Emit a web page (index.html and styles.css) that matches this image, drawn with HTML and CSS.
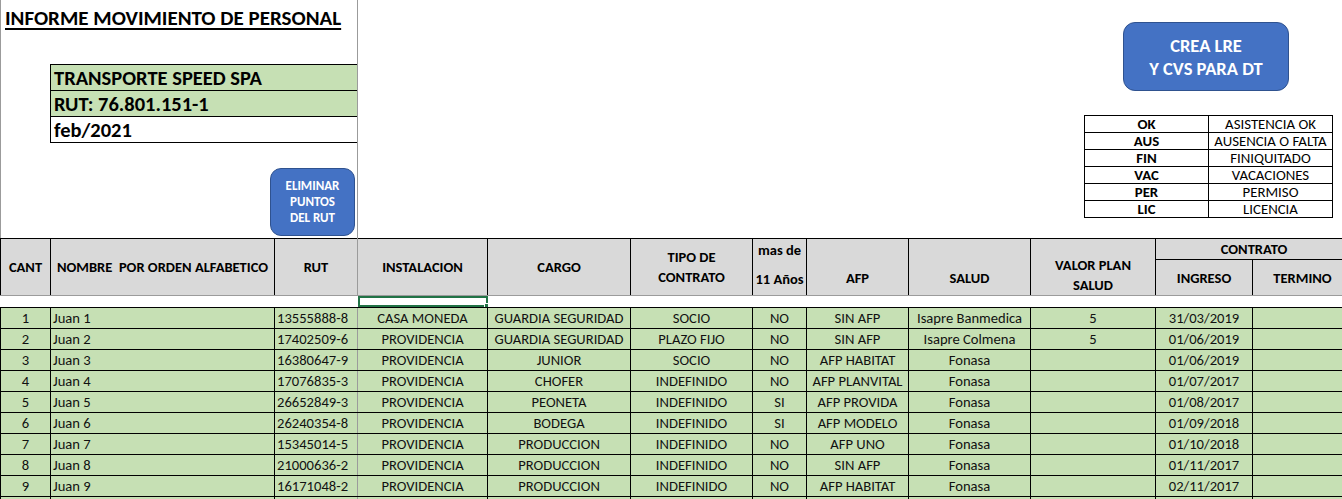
FILE: index.html
```html
<!DOCTYPE html>
<html lang="es">
<head>
<meta charset="utf-8">
<title>Informe Movimiento de Personal</title>
<link rel="stylesheet" href="styles.css">
</head>
<body>
<div class="sheet">
  <div class="top">
    <div class="pane">
      <h1 class="title">INFORME MOVIMIENTO DE PERSONAL</h1>
      <div class="company">
        <div class="co-row green">TRANSPORTE SPEED SPA</div>
        <div class="co-row green">RUT: 76.801.151-1</div>
        <div class="co-row">feb/2021</div>
      </div>
      <div class="btn-row">
        <div class="btn btn-small">ELIMINAR<br>PUNTOS<br>DEL RUT</div>
      </div>
    </div>
    <div class="right">
      <div class="btn btn-big">CREA LRE<br>Y CVS PARA DT</div>
      <table class="legend">
        <tr><th>OK</th><td>ASISTENCIA OK</td></tr>
        <tr><th>AUS</th><td>AUSENCIA O FALTA</td></tr>
        <tr><th>FIN</th><td>FINIQUITADO</td></tr>
        <tr><th>VAC</th><td>VACACIONES</td></tr>
        <tr><th>PER</th><td>PERMISO</td></tr>
        <tr><th>LIC</th><td>LICENCIA</td></tr>
      </table>
    </div>
  </div>

  <table class="grid">
    <colgroup>
      <col class="c-cant"><col class="c-nombre"><col class="c-rut"><col class="c-inst">
      <col class="c-cargo"><col class="c-tipo"><col class="c-mas"><col class="c-afp">
      <col class="c-salud"><col class="c-valor"><col class="c-ing"><col class="c-ter">
    </colgroup>
    <thead>
      <tr class="h1">
        <th rowspan="2">CANT</th>
        <th rowspan="2">NOMBRE&nbsp; POR ORDEN ALFABETICO</th>
        <th rowspan="2" class="freeze">RUT</th>
        <th rowspan="2">INSTALACION</th>
        <th rowspan="2">CARGO</th>
        <th rowspan="2">TIPO DE<br>CONTRATO</th>
        <th rowspan="2" class="mas"><div class="mas-in"><span>mas de</span><span>11 Años</span></div></th>
        <th rowspan="2" class="bottom">AFP</th>
        <th rowspan="2" class="bottom">SALUD</th>
        <th rowspan="2" class="bottom valor">VALOR PLAN<br>SALUD</th>
        <th colspan="2" class="contrato">CONTRATO</th>
      </tr>
      <tr class="h2">
        <th>INGRESO</th>
        <th>TERMINO</th>
      </tr>
    </thead>
    <tbody>
      <tr class="empty">
        <td></td><td></td><td class="freeze"></td><td class="sel"></td><td></td><td></td><td></td><td></td><td></td><td></td><td></td><td></td>
      </tr>
      <tr><td>1</td><td class="l">Juan 1</td><td class="l freeze">13555888-8</td><td>CASA MONEDA</td><td>GUARDIA SEGURIDAD</td><td>SOCIO</td><td>NO</td><td>SIN AFP</td><td>Isapre Banmedica</td><td>5</td><td>31/03/2019</td><td></td></tr>
      <tr><td>2</td><td class="l">Juan 2</td><td class="l freeze">17402509-6</td><td>PROVIDENCIA</td><td>GUARDIA SEGURIDAD</td><td>PLAZO FIJO</td><td>NO</td><td>SIN AFP</td><td>Isapre Colmena</td><td>5</td><td>01/06/2019</td><td></td></tr>
      <tr><td>3</td><td class="l">Juan 3</td><td class="l freeze">16380647-9</td><td>PROVIDENCIA</td><td>JUNIOR</td><td>SOCIO</td><td>NO</td><td>AFP HABITAT</td><td>Fonasa</td><td></td><td>01/06/2019</td><td></td></tr>
      <tr><td>4</td><td class="l">Juan 4</td><td class="l freeze">17076835-3</td><td>PROVIDENCIA</td><td>CHOFER</td><td>INDEFINIDO</td><td>NO</td><td>AFP PLANVITAL</td><td>Fonasa</td><td></td><td>01/07/2017</td><td></td></tr>
      <tr><td>5</td><td class="l">Juan 5</td><td class="l freeze">26652849-3</td><td>PROVIDENCIA</td><td>PEONETA</td><td>INDEFINIDO</td><td>SI</td><td>AFP PROVIDA</td><td>Fonasa</td><td></td><td>01/08/2017</td><td></td></tr>
      <tr><td>6</td><td class="l">Juan 6</td><td class="l freeze">26240354-8</td><td>PROVIDENCIA</td><td>BODEGA</td><td>INDEFINIDO</td><td>SI</td><td>AFP MODELO</td><td>Fonasa</td><td></td><td>01/09/2018</td><td></td></tr>
      <tr><td>7</td><td class="l">Juan 7</td><td class="l freeze">15345014-5</td><td>PROVIDENCIA</td><td>PRODUCCION</td><td>INDEFINIDO</td><td>NO</td><td>AFP UNO</td><td>Fonasa</td><td></td><td>01/10/2018</td><td></td></tr>
      <tr><td>8</td><td class="l">Juan 8</td><td class="l freeze">21000636-2</td><td>PROVIDENCIA</td><td>PRODUCCION</td><td>INDEFINIDO</td><td>NO</td><td>SIN AFP</td><td>Fonasa</td><td></td><td>01/11/2017</td><td></td></tr>
      <tr><td>9</td><td class="l">Juan 9</td><td class="l freeze">16171048-2</td><td>PROVIDENCIA</td><td>PRODUCCION</td><td>INDEFINIDO</td><td>NO</td><td>AFP HABITAT</td><td>Fonasa</td><td></td><td>02/11/2017</td><td></td></tr>
      <tr><td></td><td class="l"></td><td class="l freeze"></td><td></td><td></td><td></td><td></td><td></td><td></td><td></td><td></td><td></td></tr>
    </tbody>
  </table>
</div>
</body>
</html>
```

FILE: styles.css
```css
html, body {
  margin: 0;
  padding: 0;
  background: #ffffff;
  overflow: hidden;
}

.sheet {
  width: 1342px;
  height: 499px;
  overflow: hidden;
  font-family: Carlito, Calibri, Lato, "Liberation Sans", sans-serif;
  color: #000;
}

/* ---------- top area ---------- */
.top {
  display: flex;
  height: 238px;
}

.pane {
  width: 358px;
  flex: none;
  box-sizing: border-box;
  border-left: 1px solid #9b9b9b;
  border-right: 1px solid #9b9b9b;
  display: flex;
  flex-direction: column;
}

.title {
  margin: 6px 0 0 4px;
  font-size: 21px;
  line-height: 25px;
  font-weight: bold;
  text-decoration: underline;
  text-underline-offset: 3px;
  white-space: nowrap;
}

.company {
  margin: 33px 0 0 49px;
  border-bottom: 1px solid #000;
}

.co-row {
  height: 25px;
  border-top: 1px solid #000;
  border-left: 1px solid #000;
  padding-left: 3px;
  font-size: 20.5px;
  font-weight: bold;
  line-height: 26px;
  white-space: nowrap;
}

.co-row.green { background: #c6e0b4; }

.btn-row {
  display: flex;
  justify-content: flex-end;
  padding-right: 2px;
  margin-top: 25px;
}

.btn {
  box-sizing: border-box;
  background: #4472c4;
  border: 1px solid #2f528f;
  color: #ffffff;
  font-weight: bold;
  text-align: center;
  display: flex;
  align-items: center;
  justify-content: center;
}

.btn-small {
  width: 85px;
  height: 68px;
  border-radius: 11px;
  font-size: 13px;
  line-height: 16px;
}

.right {
  flex: 1;
  display: flex;
  flex-direction: column;
  align-items: flex-end;
}

.btn-big {
  margin-top: 22px;
  margin-right: 53px;
  width: 166px;
  height: 69px;
  border-radius: 12px;
  font-size: 18.5px;
  line-height: 23px;
}

.legend {
  margin-top: 24px;
  margin-right: 9px;
  border-collapse: collapse;
  width: 249px;
  table-layout: fixed;
  font-size: 14.8px;
}

.legend th,
.legend td {
  border: 1px solid #000;
  height: 16px;
  padding: 0;
  line-height: 16px;
  text-align: center;
  white-space: nowrap;
  overflow: hidden;
}

.legend th { width: 123px; font-weight: bold; }
.legend td { font-weight: normal; }

/* ---------- grid ---------- */
.grid {
  border-collapse: collapse;
  table-layout: fixed;
  width: 1352px;
  font-size: 14.6px;
}

.c-cant { width: 50px; }
.c-nombre { width: 224px; }
.c-rut { width: 83px; }
.c-inst { width: 130px; }
.c-cargo { width: 143px; }
.c-tipo { width: 122px; }
.c-mas { width: 54px; }
.c-afp { width: 102px; }
.c-salud { width: 122px; }
.c-valor { width: 125px; }
.c-ing { width: 97px; }
.c-ter { width: 100px; }

.grid th {
  background: #d9d9d9;
  border: 1px solid #000;
  border-bottom-color: #9b9b9b;
  font-weight: bold;
  font-size: 14.5px;
  line-height: 20px;
  padding: 0;
  text-align: center;
  vertical-align: middle;
  white-space: nowrap;
}

.grid .h1 { height: 21px; }
.grid .h2 { height: 36px; }

.grid th.contrato { border-bottom-color: #000; vertical-align: middle; }
.grid th.bottom { vertical-align: bottom; padding-bottom: 7px; }
.grid th.valor { padding-bottom: 0; }

.grid th.mas { vertical-align: top; padding: 0; }
.mas-in {
  height: 56px;
  display: flex;
  flex-direction: column;
  justify-content: space-between;
  padding: 1px 0 6px;
  box-sizing: border-box;
}

.grid td {
  border: 1px solid #000;
  background: #c6e0b4;
  height: 20px;
  padding: 0 2px;
  line-height: 20px;
  text-align: center;
  vertical-align: bottom;
  white-space: nowrap;
  overflow: hidden;
  color: #111;
}

.grid td.l { text-align: left; }

.grid .freeze { border-right-color: #9b9b9b; }

.grid tr.empty td {
  background: #ffffff;
  border-left: none;
  border-right: none;
  border-top-color: #9b9b9b;
  height: 11px;
  padding: 0;
}

.grid td.sel {
  position: relative;
  box-shadow: inset 0 0 0 2px #217346;
}

.grid td.sel::after {
  content: "";
  position: absolute;
  right: -3px;
  bottom: -3px;
  width: 5px;
  height: 5px;
  background: #217346;
  border: 1px solid #fff;
}
```
